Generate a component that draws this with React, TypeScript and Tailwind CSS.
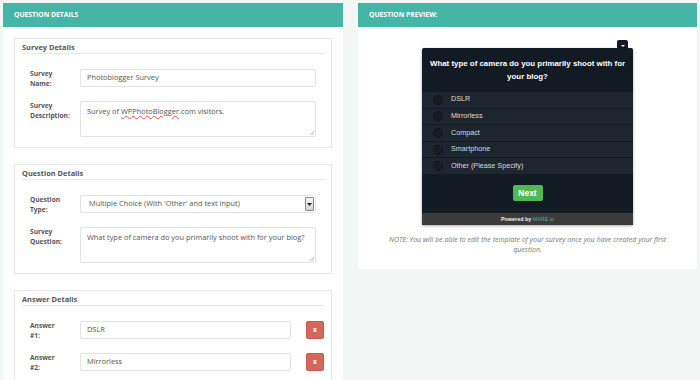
import React from "react";

const sans = { fontFamily: '"Open Sans", "Liberation Sans", sans-serif' };
const arial = { fontFamily: '"Liberation Sans", Arial, sans-serif' };

function Resize() {
    return (
        <svg className="absolute right-[1px] bottom-[1px]" width="5" height="5" viewBox="0 0 5 5">
            <path d="M1 5 L5 1 M3 5 L5 3" stroke="#aaa" strokeWidth="0.7" />
        </svg>
    );
}

function Label({ a, b }: { a: string; b: string }) {
    return (
        <div className="w-[50px] h-[18px] shrink-0 text-[6.6px] leading-[10px] font-bold text-[#555]">
            {a}
            <br />
            {b}
        </div>
    );
}

function Card({ title, children, flush }: { title: string; children: React.ReactNode; flush?: boolean }) {
    return (
        <div className="shrink-0 border border-[#e6e7e7] bg-white px-[7px] pt-[4px] pb-[10px]">
            <div className="h-[11px] border-b border-[#e6e7e7] text-[7.4px] leading-[9px] font-bold text-[#555]">{title}</div>
            <div className={flush ? "pl-[8px] pt-[15px] flex flex-col gap-[14px]" : "px-[8px] pt-[15px] flex flex-col gap-[14px]"}>
                {children}
            </div>
        </div>
    );
}

function Field({ value }: { value: string }) {
    return (
        <div className="flex-1 h-[18px] border border-[#e3e3e3] rounded-[2px] px-[6px] flex items-center text-[7.4px] text-[#555]">
            {value}
        </div>
    );
}

function Area({ children }: { children: React.ReactNode }) {
    return (
        <div className="relative flex-1 h-[36px] border border-[#e3e3e3] rounded-[2px] px-[6px] pt-[4px] text-[7.4px] leading-[10px] text-[#555]">
            {children}
            <Resize />
        </div>
    );
}

function Answer({ n, value }: { n: number; value: string }) {
    return (
        <div className="flex items-start gap-[15px]">
            <div className="flex flex-1 items-start">
                <Label a="Answer" b={`#${n}:`} />
                <Field value={value} />
            </div>
            <div className="w-[18px] h-[18px] shrink-0 rounded-[2px] bg-[#d5685a] border border-[#c95a4c] flex items-center justify-center text-white text-[6.5px] font-bold">
                x
            </div>
        </div>
    );
}

const options = ["DSLR", "Mirrorless", "Compact", "Smartphone", "Other (Please Specify)"];

export default function App() {
    return (
        <div className="w-[700px] h-[380px] overflow-hidden bg-[#f4f5f5] flex items-start gap-[15px] pt-[3px] pl-[3px]" style={sans}>
            {/* Left: question details */}
            <div className="w-[340px] h-[377px] shrink-0 bg-white flex flex-col overflow-hidden">
                <div className="h-[24px] shrink-0 bg-[#45b5a6] px-[11px] flex items-center text-white text-[6.8px] font-bold uppercase">
                    Question Details
                </div>
                <div className="shrink-0 px-[11px] pt-[11px] flex flex-col gap-[16px]">
                    <Card title="Survey Details">
                        <div className="flex items-start">
                            <Label a="Survey" b="Name:" />
                            <Field value="Photoblogger Survey" />
                        </div>
                        <div className="flex items-start">
                            <Label a="Survey" b="Description:" />
                            <Area>
                                Survey of{" "}
                                <span className="underline decoration-wavy decoration-[#e05050] decoration-[0.6px] underline-offset-[1px]">
                                    WPPhotoBlogger
                                </span>
                                .com visitors.
                            </Area>
                        </div>
                    </Card>

                    <Card title="Question Details">
                        <div className="flex items-start">
                            <Label a="Question" b="Type:" />
                            <div className="flex-1 h-[18px] border border-[#e3e3e3] rounded-[2px] pl-[8px] pr-[1px] flex items-center text-[7.4px] text-[#555]">
                                <span className="flex-1">Multiple Choice (With 'Other' and text input)</span>
                                <div className="w-[9px] h-[14px] border border-[#888] rounded-[1px] bg-gradient-to-b from-[#f4f4f4] to-[#d6d6d6] flex items-center justify-center">
                                    <svg width="5" height="3" viewBox="0 0 5 3">
                                        <path d="M0 0 L5 0 L2.5 3 Z" fill="#222" />
                                    </svg>
                                </div>
                            </div>
                        </div>
                        <div className="flex items-start">
                            <Label a="Survey" b="Question:" />
                            <Area>What type of camera do you primarily shoot with for your blog?</Area>
                        </div>
                    </Card>

                    <Card title="Answer Details" flush>
                        <Answer n={1} value="DSLR" />
                        <Answer n={2} value="Mirrorless" />
                    </Card>
                </div>
            </div>

            {/* Right: preview */}
            <div className="w-[339px] shrink-0 bg-white flex flex-col">
                <div className="h-[24px] shrink-0 bg-[#45b5a6] px-[11px] flex items-center text-white text-[6.8px] font-bold uppercase">
                    Question Preview:
                </div>
                <div className="pt-[13px] pb-[14px] flex flex-col items-center">
                    <div className="w-[211px] flex flex-col" style={arial}>
                        <div className="flex justify-end pr-[5px]">
                            <div className="w-[11px] h-[8px] bg-[#121b24] rounded-t-[2px] flex items-end justify-center pb-[1px]">
                                <svg width="4" height="2" viewBox="0 0 4 2">
                                    <path d="M0 0 L4 0 L2 2 Z" fill="#fff" />
                                </svg>
                            </div>
                        </div>
                        <div className="bg-[#121b24] shadow-[0_1px_3px_rgba(0,0,0,0.35)] rounded-t-[2px]">
                            <div className="px-[6px] pt-[10px] pb-[8px] text-center text-white font-bold text-[7.9px] leading-[12.5px]">
                                What type of camera do you primarily shoot with for your blog?
                            </div>
                            {options.map((o) => (
                                <div
                                    key={o}
                                    className="h-[16.6px] bg-[#1d252e] border-t border-[#131a21] flex items-center pl-[11px] text-[#dcdcdc] text-[7.2px]"
                                >
                                    <div className="w-[10px] h-[10px] rounded-full border border-[#0f151b] bg-[#161d25]" />
                                    <span className="ml-[8px]">{o}</span>
                                </div>
                            ))}
                            <div className="h-[39px] flex items-center justify-center">
                                <div className="w-[30px] h-[16px] rounded-[2px] bg-[#52b855] flex items-center justify-center text-white font-bold text-[8.5px]">
                                    Next
                                </div>
                            </div>
                            <div className="h-[12px] bg-[#3b3b3b] flex items-center justify-center text-[5.4px] font-bold text-[#eee]">
                                Powered by&nbsp;<span className="text-[#3fb5a3] font-normal">MARE.io</span>
                            </div>
                        </div>
                    </div>
                    <div className="mt-[10px] text-center italic text-[7px] leading-[10px] text-[#777]" style={sans}>
                        NOTE: You will be able to edit the template of your survey once you have created your first
                        <br />
                        question.
                    </div>
                </div>
            </div>
        </div>
    );
}
